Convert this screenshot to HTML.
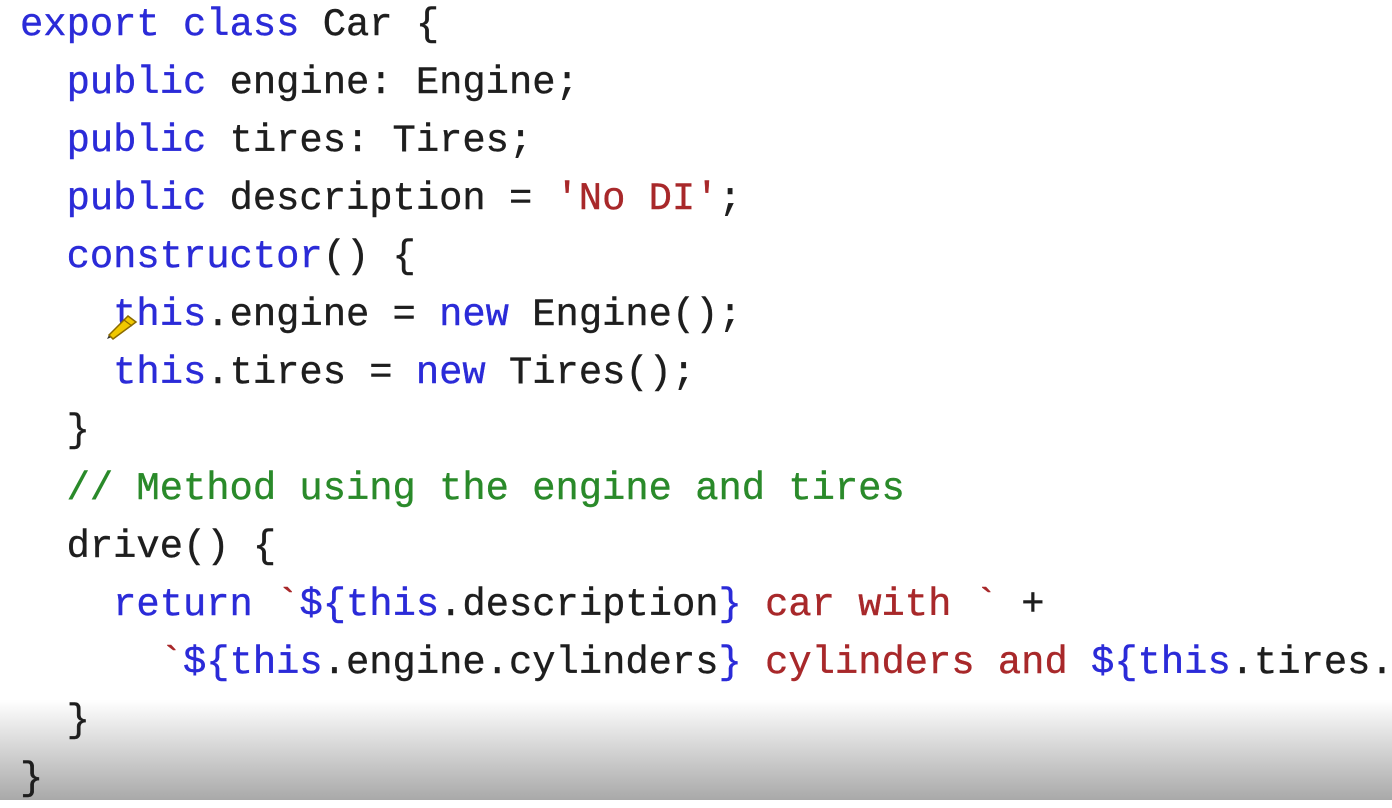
<!DOCTYPE html>
<html><head><meta charset="utf-8"><style>
html,body{margin:0;padding:0;width:1392px;height:800px;overflow:hidden;background:#fff}
.g{position:absolute;left:0;top:700px;width:1392px;height:100px;background:linear-gradient(#fff 0%,#d8d8d8 45%,#a9a9a9 100%);z-index:0}
pre{position:absolute;z-index:1;left:20px;top:-4px;margin:0;font-family:"Liberation Mono",monospace;font-size:38.8px;line-height:58px;color:#1e1e1e;white-space:pre;-webkit-text-stroke:0.4px currentColor}
.k{color:#2b2bd8}.s{color:#a8282a}.c{color:#2a8a2a}
svg{z-index:2}
</style></head><body>
<div class="g"></div>
<pre><span class="k">export</span> <span class="k">class</span> Car {
  <span class="k">public</span> engine: Engine;
  <span class="k">public</span> tires: Tires;
  <span class="k">public</span> description = <span class="s">'No DI'</span>;
  <span class="k">constructor</span>() {
    <span class="k">this</span>.engine = <span class="k">new</span> Engine();
    <span class="k">this</span>.tires = <span class="k">new</span> Tires();
  }
  <span class="c">// Method using the engine and tires</span>
  drive() {
    <span class="k">return</span> <span class="s">`</span><span class="k">${this</span>.description<span class="k">}</span><span class="s"> car with `</span> +
      <span class="s">`</span><span class="k">${this</span>.engine.cylinders<span class="k">}</span><span class="s"> cylinders and </span><span class="k">${this</span>.tires.
  }
}</pre>
<svg style="position:absolute;left:104px;top:306px" width="36" height="36" viewBox="0 0 36 36"><path d="M5 29 L3 33 L8 31 Z" fill="#333"/><path d="M5 29 L24 10 L32 16 L9 33 Z" fill="#f0c800" stroke="#8a6a00" stroke-width="1.5"/><path d="M20 14 L28 20" stroke="#8a6a00" stroke-width="1.2"/></svg>
</body></html>
